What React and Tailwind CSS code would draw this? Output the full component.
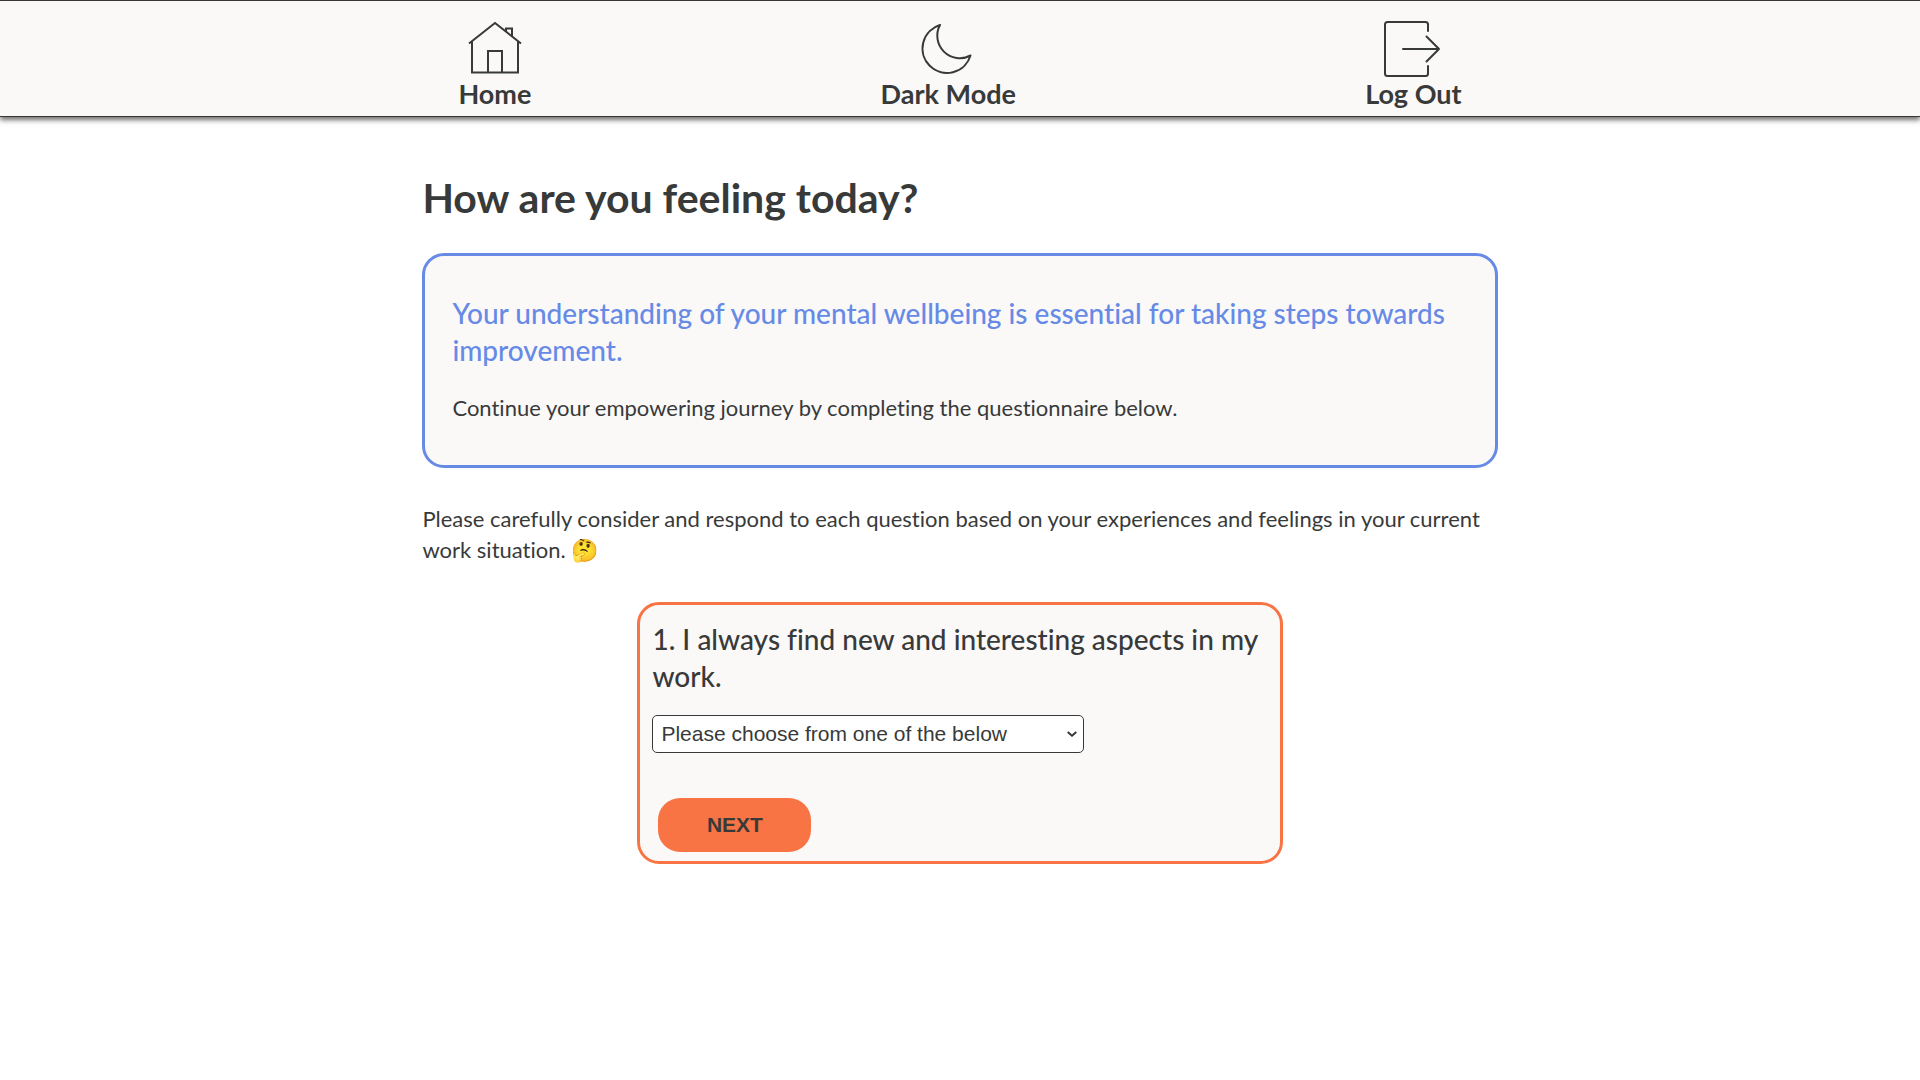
function HomeIcon() {
  return (
    <svg viewBox="0 0 60 60" className="size-[60px]" fill="none" stroke="currentColor" strokeWidth="2" aria-hidden="true">
      <path d="M4 24.5 30 4l26 20.5" />
      <path d="M7 22v31.500h46V22" />
      <path d="M23 53V32h14v21" />
      <path d="M41 13V9.500H47v8" />
    </svg>
  );
}

function MoonIcon() {
  return (
    <svg viewBox="0 0 60 60" className="size-[60px]" fill="none" stroke="currentColor" strokeWidth="2" strokeLinejoin="round" aria-hidden="true">
      <path d="M22 6A24.500 24.500 0 1 0 52.500 36.500A22.500 22.500 0 0 1 22 6Z" />
    </svg>
  );
}

function LogOutIcon() {
  return (
    <svg viewBox="0 0 60 60" className="size-[60px]" fill="none" stroke="currentColor" strokeWidth="2" strokeLinecap="round" strokeLinejoin="round" aria-hidden="true">
      <path d="M45 12V5.500Q45 3 42.500 3H4.500Q2 3 2 5.500V54.500Q2 57 4.500 57H42.500Q45 57 45 54.500V47" />
      <path d="M20 30H56M43.500 17.500 56 30 43.500 42.500" />
    </svg>
  );
}

const navItem = 'flex flex-col items-center text-[27px] leading-[30px] font-bold cursor-pointer';

export default function App() {
  return (
    <div className="min-h-screen bg-white font-['Lato',sans-serif] text-[#383a3a] [font-variant-ligatures:none]">
      <header className="border-y border-[#363636] bg-[#faf9f8] pt-[18px] pb-[7px] shadow-[0_3px_5px_rgba(50,50,50,0.7)]">
        <nav className="mx-auto flex w-[56%] justify-between px-9">
          <a href="#home" className={navItem}>
            <HomeIcon />
            Home
          </a>
          <button type="button" className={navItem}>
            <MoonIcon />
            Dark Mode
          </button>
          <button type="button" className={navItem}>
            <LogOutIcon />
            Log Out
          </button>
        </nav>
      </header>

      <main className="mx-auto w-[56%] pt-14 pb-16">
        <h1 className="text-[41px] leading-[50px] font-bold">How are you feeling today?</h1>

        <section className="mt-[30px] rounded-[22px] border-3 border-[#668ae6] bg-[#faf9f8] px-[27px] pt-[39px] pb-[42px]">
          <h2 className="text-[28px] leading-[37px] font-medium text-[#668ae6]">
            Your understanding of your mental wellbeing is essential for taking steps towards improvement.
          </h2>
          <p className="mt-[23px] text-[22px] leading-[31px]">
            Continue your empowering journey by completing the questionnaire below.
          </p>
        </section>

        <p className="mt-[35px] text-[22px] leading-[31px]">
          Please carefully consider and respond to each question based on your experiences and feelings in your
          current work situation. 🤔
        </p>

        <form
          className="mx-auto mt-[37px] w-3/5 rounded-[22px] border-3 border-[#f87444] bg-[#faf9f8] px-3 pt-4 pb-[9px]"
          onSubmit={(e) => e.preventDefault()}
        >
          <label htmlFor="answer" className="block text-[28px] leading-[37px] font-medium">
            1. I always find new and interesting aspects in my work.
          </label>
          <div className="relative mt-5 w-[432px] max-w-full">
            <select
              id="answer"
              className="block h-[38px] w-full appearance-none rounded-[5px] border border-[#383a3a] bg-white pr-8 pl-2 font-['Liberation_Sans',sans-serif] text-[21px]"
            >
              <option>Please choose from one of the below</option>
              <option>Strongly agree</option>
              <option>Agree</option>
              <option>Disagree</option>
              <option>Strongly disagree</option>
            </select>
            <svg
              viewBox="0 0 10 6"
              className="pointer-events-none absolute top-4 right-[7px] h-1.5 w-2.5"
              fill="none"
              stroke="currentColor"
              strokeWidth="2"
              aria-hidden="true"
            >
              <path d="M.7 .9 5 4.700 9.300 .9" />
            </svg>
          </div>
          <button
            type="submit"
            className="mt-[45px] ml-1.5 block h-[54px] w-[153px] cursor-pointer rounded-[22px] bg-[#f87444] font-['Liberation_Sans',sans-serif] text-[21px] font-bold"
          >
            NEXT
          </button>
        </form>
      </main>
    </div>
  );
}
